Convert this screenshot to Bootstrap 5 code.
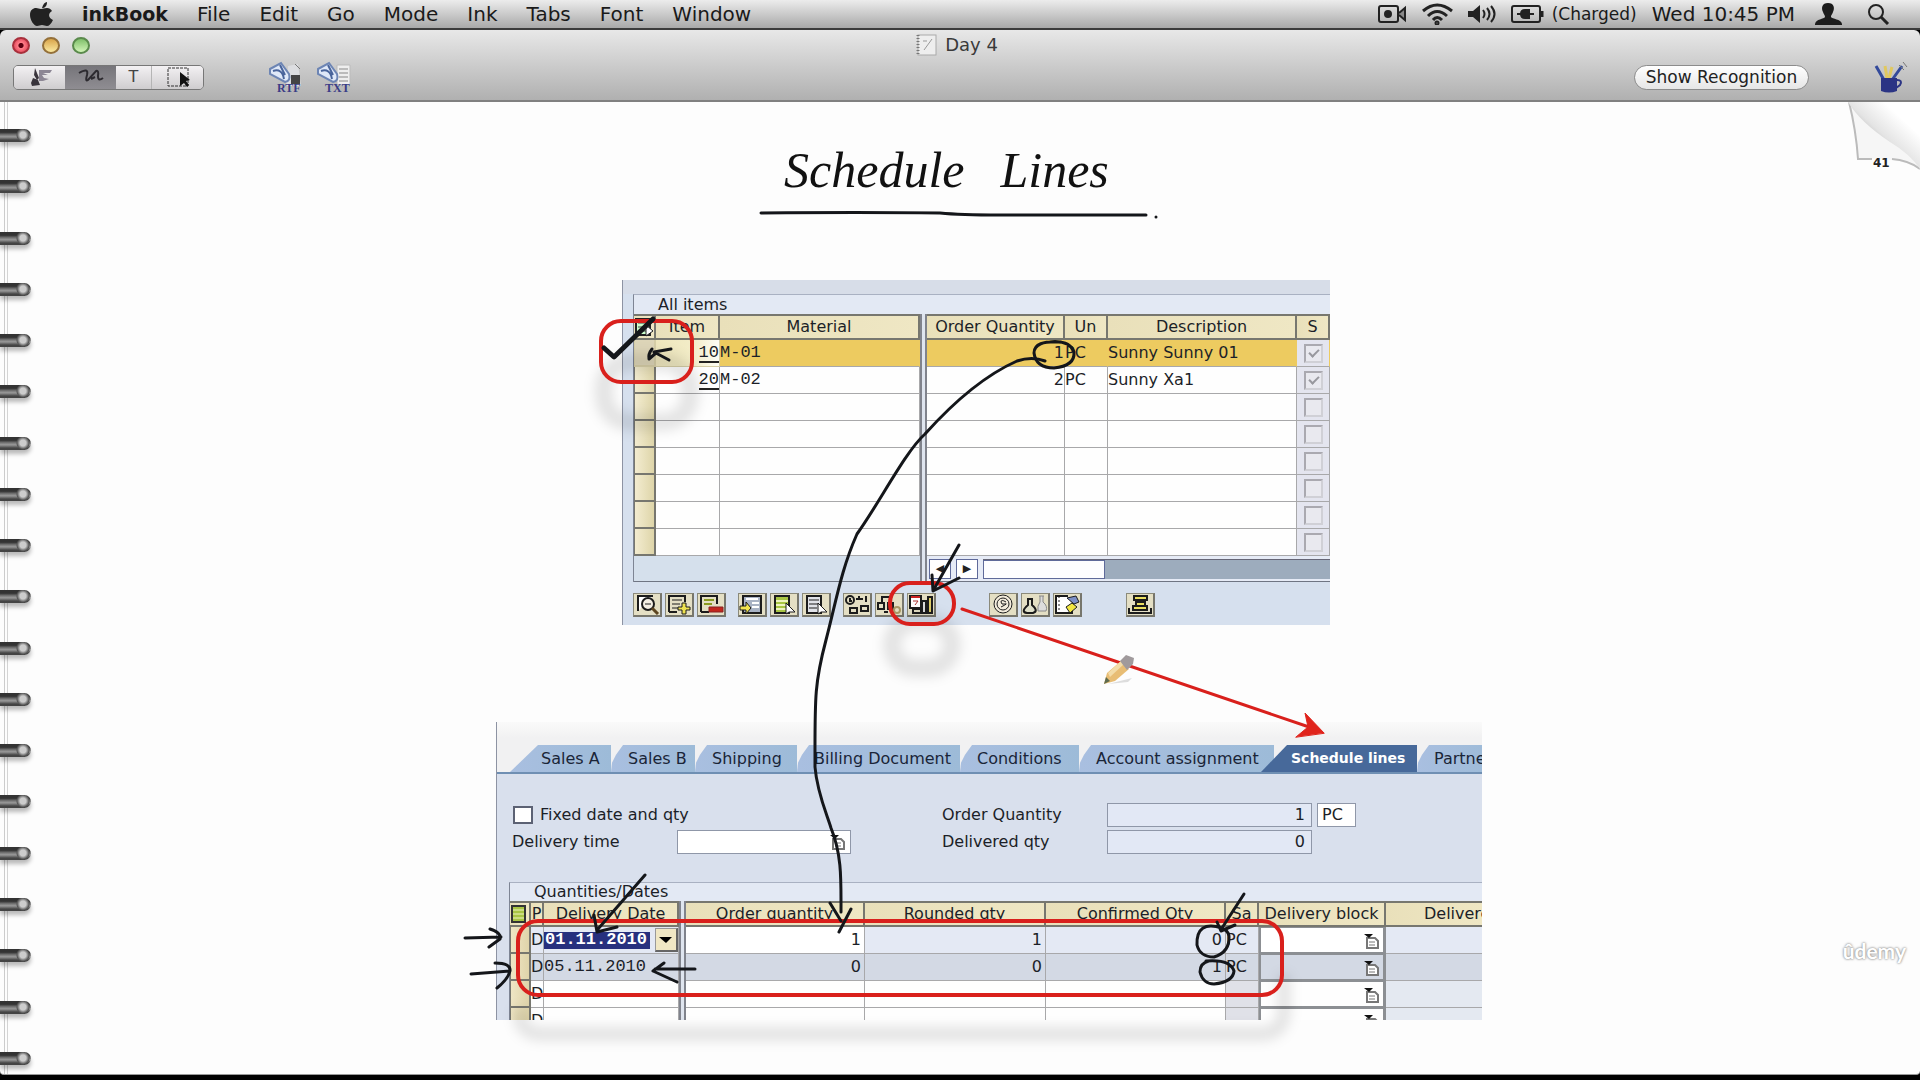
<!DOCTYPE html>
<html lang="en">
<head>
<meta charset="utf-8">
<meta name="viewport" content="width=device-width, initial-scale=1">
<title>inkBook - Day 4</title>
<link rel="stylesheet" href="https://cdn.jsdelivr.net/npm/bootstrap@5.3.0/dist/css/bootstrap.min.css">
<script src="https://cdn.jsdelivr.net/npm/bootstrap@5.3.0/dist/js/bootstrap.bundle.min.js"></script>
<style>
body{font-family:"DejaVu Sans",sans-serif;font-size:16px;line-height:20px;color:#1c1f28;background:#000;overflow-x:hidden}
.menubar{height:30px;padding:0 30px;gap:29px;font-size:20px;line-height:28px;color:#1a1a1a;background:linear-gradient(#ececec,#a9a9a9);border-bottom:2px solid #3c3c3c}
.menubar a{color:inherit;text-decoration:none}
.menubar .app-name{font-size:19px}
.tray{gap:15px}
.tray .charge{font-size:17px;margin-left:-8px}
.tray .clock{margin-right:4px}
.window-top{background:linear-gradient(#e8e8e8,#b0b0b0);border-bottom:2px solid #808080;border-radius:6px 6px 0 0;height:72px}
.title-row{height:30px;padding-left:12px}
.lights{gap:12px}
.light{width:18px;height:17px;border-radius:50%;border:2px solid #777}
.light.close-l{background:radial-gradient(circle,#5a0010 0 22%,#ff7d88 32%,#d8344a);border-color:#a8303c}
.light.min-l{background:linear-gradient(#d9a44a,#fbe9a0);border-color:#94703a}
.light.max-l{background:linear-gradient(#7fbf6a,#d2f5b8);border-color:#5a8a4c}
.doc-title{font-size:18px;color:#3a3a3a;gap:8px}
.tool-row{height:34px;padding:0 12px 0 13px}
.seg{border:1px solid #777;border-radius:5px;overflow:hidden;height:25px}
.seg button{border:0;background:linear-gradient(#f3f1f3,#cfcdcf);width:51px;height:23px;padding:0;display:flex;align-items:center;justify-content:center;font-size:16px;color:#444}
.seg button.on{background:linear-gradient(#76757a,#8f8d92)}
.seg button.txt{width:36px;border-right:1px solid #b5b5b5}
.plain-btn{border:0;background:none;padding:0;line-height:0}
.export{margin-left:62px}
.cup{margin-left:65px}
.recog{border:1px solid #8c8c8c;border-radius:13px;background:linear-gradient(#fff,#e6e6e6);height:25px;width:175px;padding:0;font-size:17px;line-height:22px;color:#222}
.notebook{background:#fdfdfd;border-bottom:1px solid #999;margin-bottom:5px;border-radius:0 0 4px 4px;overflow:hidden}
.binder{width:32px;padding:27px 0 9px;background:linear-gradient(90deg,transparent 4px,#ccc 4px 5px,transparent 5px 7px,#d4d4d4 7px 8px,transparent 8px);left:0;top:0;bottom:0}
.binder i{display:block;height:13px;width:31px;border-radius:0 7px 7px 0;background:radial-gradient(circle at 23px 6px,#ccc 0 3px,#555 6px,transparent 7px),linear-gradient(#333 0 25%,#777 45%,#999 60%,#444 85%);box-shadow:0 4px 4px #0004}
.curl{top:0;right:0}
.udemy{right:14px;bottom:111px;font:700 21px/24px Lato,sans-serif;color:#fff;text-shadow:0 0 2px #888,0 0 3px #aaa}
.sheet{width:1120px;margin:0 auto;padding-bottom:54px}
.hand{font:italic 400 50px/56px "Liberation Serif",serif;color:#111;gap:36px;margin:0;padding:40px 0 82px 384px}
.ink{left:0;top:0;pointer-events:none}
.mono{font-family:"Liberation Mono",monospace;font-size:17px}

.sap{border-left:1px solid #8d93a3;background:#d6e0ed}
.items-shot{width:708px;margin-left:222px;padding:14px 0 8px 10px;background:linear-gradient(#d7dde8 14px,#d6e0ee 14px)}
.box{border-top:1px solid #a9b1c2;border-left:1px solid #7e8594;background:#e3e9f4}
.box-label{font-size:16px;line-height:19px;margin:0}
.grid{table-layout:fixed;border-collapse:separate;border-spacing:0;width:100%;margin:0}
.grid th{height:26px;padding:0;text-align:center;font-weight:400;background:linear-gradient(90deg,#e9e0ba,#efe7c4);border:solid #77776f;border-width:2px 2px 2px 0;white-space:nowrap;overflow:hidden;line-height:20px}
.grid td{height:27px;padding:0;background:#fefefe;border:solid #a8a8aa;border-width:0 1px 1px 0;line-height:20px;white-space:nowrap;overflow:hidden}
.grid .pick{background:linear-gradient(90deg,#f3ecd0,#ded5a9);border:solid #77776f;border-width:0 2px 2px 1px}
.grid tr.sel td{background:#edcb60;border-right-color:#edcb60}
.grid tr.sel td.pale,.grid tr.sel td.pick{background:linear-gradient(90deg,#eee6bd,#f3edc8 60%,#fdfdf6);border-color:#d5cda6}
.grid tr.sel td.pick{background:#ddd5b8}
.under{border-bottom:2px solid #222;display:inline-block;line-height:17px}
.grid .grey,.grid tr.sel td.grey{background:#e4e5ef;text-align:center}
.grid input[type=checkbox]{appearance:none;width:19px;height:19px;border:2px solid #aaa9b0;border-right-color:#d0d0d6;border-bottom-color:#d0d0d6;background:#e9e9ef;display:block;margin:0 auto}
.grid input:checked::after{content:"";display:block;width:10px;height:6px;margin:3px 0 0 3px;border:solid #98989e;border-width:0 0 2px 2px;transform:rotate(-45deg)}
.col-rule{flex:none;width:7px;border:solid #80838c;border-width:0 2px;background:#dfe5ef}
.part-material{flex:none;width:286px}
.part-date{flex:none;width:169px}
.part-qty{flex:none;width:800px}
.foot-l{height:26px;background:#d5e0ec;border-bottom:1px solid #6f7583}
.foot-r{height:26px;padding:3px 0 3px 2px;gap:5px;background:#e6ebf6;border-bottom:1px solid #6f7583}
.arrow-b{border:1px solid #5f6a9a;background:#fff;width:22px;height:20px;padding:0;font-size:11px;line-height:16px;color:#222}
.track{background:#9dacbd;border-top:1px solid #667;height:20px}
.thumb{background:#fdfdff;border:1px solid #5f6a9a;width:122px;height:19px}
.icons{padding-top:11px;gap:12px}
.icons .set{display:flex;gap:3px}
.icons .far{margin-left:41px}
.icons .far2{margin-left:32px}
.ib{width:29px;height:24px;padding:0;border:1px solid #8b8a7a;border-right:2px solid #77766c;border-bottom:2px solid #77766c;background:#e4dfc4;line-height:0}
.ib svg{width:26px;height:21px;fill:none;stroke:#1c1c1c;stroke-width:2}

.lines-shot{width:986px;height:298px;margin:97px 0 0 96px;overflow:hidden;background:#d9e0ed}
.tabband{background:linear-gradient(#fafafa,#f1f1f2 16px);padding:23px 0 0 14px;border-bottom:2px solid #6f8fb3;margin-left:-1px}
.tabband a{height:27px;line-height:27px;padding-left:17px;background:linear-gradient(90deg,#a9bfe0,#9dbbd8);color:#1a2538;text-decoration:none;white-space:nowrap;flex:none;clip-path:polygon(0 100%,1px 66%,5px 36%,12px 0,100% 0,100% 100%)}
.tabband a.first{padding-left:31px;width:101px;clip-path:polygon(0 100%,28px 0,100% 0,100% 100%)}
.tabband a.current{padding-left:30px;margin-left:-13px;width:156px;background:#47699a;color:#fff;font-weight:700;font-size:14px;clip-path:polygon(0 100%,26px 0,100% 0,100% 100%)}
.w84{width:84px}.w102{width:102px}.w163{width:163px}.w119{width:119px}.w195{width:195px}
.fields{padding:27px 0 0 15px}
.fields .line{height:27px;display:flex;align-items:center}
.fields input[type=text]{border:1px solid #8f97a8;height:24px;padding:0 6px;border-radius:0;background:#fff;font:inherit;color:inherit}
.fields input[readonly]{background:#e2e8f5;text-align:right;width:205px}
.fields input[type=checkbox]{appearance:none;width:20px;height:18px;border:2px solid #5c6274;background:#fff;margin:0 7px 0 1px}
.fields input.unit{width:39px;margin-left:5px;padding:0 4px}
.fields input.time{width:174px}
.w-left{width:430px}.w-lab{width:165px}
.match{left:317px}
.q-box{margin:27px 0 0 12px}
.q-box .box-label{padding-left:24px;line-height:18px}
.g2 tr.r1 td{background:#e4e9f4}
.g2 tr.r2 td{background:#d3d9e4}
.g2 tr.r1 td.white{background:#fff}
.g2 td.num{text-align:right;padding-right:3px}
.g2 td.sa{background:#e0e1e8}
.g2 td.pick.pick{background:linear-gradient(90deg,#efe6c4,#dfd4aa);border:solid #77776f;border-width:0 2px 2px 1px}
.g2 td.blk.blk{border:2px solid #8c8f93;border-width:1px 3px 2px 2px}
.g2 td.last{background:#e4e9f1}
.g2 th.clipped{text-align:left;padding-left:38px}
.date-in{width:106px;height:17px;border:0;padding:0 1px;background:#27307e;color:#fff;font-weight:700}
.drop{width:23px;height:24px;border:1px solid #999;border-right:2px solid #666;border-bottom:2px solid #666;background:#f0e7c4;padding:0;line-height:0}
</style>
</head>
<body class="min-vh-100 d-flex flex-column">
<nav class="menubar d-flex align-items-center" aria-label="Menu bar">
  <a href="#" aria-label="Apple" class="lh-1"><svg width="23" height="24" viewBox="0 0 23 24" fill="#222"><path d="M12 6C13 2 15 0 17 0C17 4 15 6 12 6ZM11 7C13 7 14 6 17 6C19 6 21 7 22 9C18 11 18 16 23 18C21 22 19 24 17 24C15 24 14 23 12 23C10 23 9 24 7 24C4 24 0 18 0 13C0 8 3 6 6 6C8 6 9 7 11 7Z"/></svg></a>
  <a href="#" class="fw-bold app-name">inkBook</a><a href="#">File</a><a href="#">Edit</a><a href="#">Go</a><a href="#">Mode</a><a href="#">Ink</a><a href="#">Tabs</a><a href="#">Font</a><a href="#">Window</a>
  <div class="tray d-flex align-items-center ms-auto">
    <svg width="29" height="18" viewBox="0 0 29 18" fill="none" stroke="#222" stroke-width="2"><rect x="1" y="1" width="19" height="16" rx="2"/><circle cx="10" cy="9" r="3" fill="#222"/><path d="M21 8l6-5v12l-6-5" fill="#888"/></svg>
    <svg width="31" height="22" viewBox="0 0 31 22" fill="none" stroke="#222" stroke-width="3"><path d="M1 8Q15-4 30 8M6 13Q15 4 25 13M11 17Q15 12 20 17"/><circle cx="15" cy="20" r="1"/></svg>
    <svg width="28" height="20" viewBox="0 0 28 20" fill="none" stroke="#222" stroke-width="2"><path d="M0 7h5l7-6v18l-7-6H0z" fill="#222" stroke="none"/><path d="M15 6q3 4 0 8M19 4q5 6 0 12M23 2q7 8 0 16"/></svg>
    <svg width="34" height="18" viewBox="0 0 34 18" fill="none" stroke="#222" stroke-width="2"><rect x="1" y="1" width="28" height="16" rx="2"/><path d="M31 6v6" stroke-width="3"/><path d="M6 9h5M23 9h-4M18 5h-4q-4 0-4 4t4 4h4z" fill="#222"/></svg>
    <span class="charge">(Charged)</span>
    <span class="clock">Wed 10:45 PM</span>
    <svg width="29" height="22" viewBox="0 0 29 22" fill="#1c1c1c"><path d="M14 0c6 0 7 5 5 9-1 3-2 3-2 5 1 2 10 2 11 7v1H1v-1c1-5 9-5 10-7 0-2-1-2-2-5-2-4-1-9 5-9z"/></svg>
    <a href="#" aria-label="Search" class="ms-2 lh-1"><svg width="24" height="22" viewBox="0 0 24 22" fill="none" stroke="#222" stroke-width="3"><circle cx="10" cy="9" r="7" stroke-width="2"/><path d="M15 14l7 7"/></svg></a>
  </div>
</nav>
<header class="window-top">
  <div class="title-row d-flex align-items-center">
    <div class="lights d-flex"><button class="light close-l p-0" aria-label="Close"></button><button class="light min-l p-0" aria-label="Minimise"></button><button class="light max-l p-0" aria-label="Zoom"></button></div>
    <div class="doc-title d-flex align-items-center justify-content-center flex-grow-1 pe-5 me-5">
      <svg width="21" height="22" viewBox="0 0 21 22"><rect x="2" y="1" width="18" height="20" fill="#eee" stroke="#aaa"/><path d="M2 1v20" stroke="#777" stroke-width="3" stroke-dasharray="1 2"/><path d="M8 16l8-11M7 7h4" stroke="#999"/></svg>
      <span>Day 4</span>
    </div>
  </div>
  <div class="tool-row d-flex align-items-center">
    <div class="seg d-flex" role="group" aria-label="Tools">
      <button aria-label="Brush"><svg width="26" height="20" viewBox="0 0 26 20"><path d="M12 3h13l-2 3h-7l5 2h-6l2 3 5 1-6 2h-4z" fill="#8c8694"/><path d="M8 1l4 10-2 2-3-5zM6 11l5 2 2 5-8 1-1-3z" fill="#39343c"/></svg></button>
      <button class="on" aria-label="Pen"><svg width="26" height="18" viewBox="0 0 26 18" fill="none" stroke="#2d2b30" stroke-width="2"><path d="M1 5q10-6 8 2q-2 7 1 5l8-9q3-1 2 5 0 6 5 2M13 11l4-2"/></svg></button>
      <button class="txt">T</button>
      <button aria-label="Select"><svg width="26" height="22" viewBox="0 0 26 22"><rect x="3" y="2" width="20" height="18" fill="none" stroke="#333" stroke-dasharray="3 1"/><path d="M15 6v14l4-3 3 4 2-2-3-4 4-1z" fill="#111"/></svg></button>
    </div>
    <button class="plain-btn export" aria-label="Export RTF"><svg width="38" height="34" viewBox="0 0 38 34"><path d="M22 6l10-2 3 22H20z" fill="#dcdde0"/><path d="M4 9l11-6 8 11q2 7-4 8L4 14z" fill="#dfe8f8" stroke="#6d85b4" stroke-width="2"/><path d="M7 11q9-3 11 8M14 5l5 10" stroke="#49649b" stroke-width="2" fill="none"/><path d="M25 15h9v9h-9z" fill="#444"/><path d="M29 4l5 5" stroke="#777"/><text x="11" y="32" font-family="Liberation Serif" font-weight="700" font-size="12" fill="#3a3d86">RTF</text></svg></button>
    <button class="plain-btn ms-2" aria-label="Export TXT"><svg width="42" height="34" viewBox="-4 0 42 34"><path d="M21 5h13v20H21z" fill="#eee" stroke="#bbb"/><path d="M23 9h9M23 13h9M23 17h9M23 21h9" stroke="#888"/><path d="M2 9l11-6 8 11q2 7-4 8L2 14z" fill="#dfe8f8" stroke="#6d85b4" stroke-width="2"/><path d="M5 11q9-3 11 8M12 5l5 10" stroke="#49649b" stroke-width="2" fill="none"/><text x="9" y="32" font-family="Liberation Serif" font-weight="700" font-size="12" fill="#3a3d86">TXT</text></svg></button>
    <button class="recog ms-auto">Show Recognition</button>
    <button class="plain-btn cup" aria-label="Pens"><svg width="34" height="31" viewBox="0 0 34 31"><path d="M2 4l8 14M28 4L18 18" stroke="#334a9b" stroke-width="3"/><path d="M11 4l2 12M18 5l-3 11" stroke="#e0c860" stroke-width="3"/><path d="M25 3l5 5M29 0l4 5" stroke="#777"/><path d="M7 16h16v13q-8 3-16 0z" fill="#2b3484"/><path d="M23 18q6 0 3 5l-4 3" fill="none" stroke="#2b3484" stroke-width="2"/></svg></button>
  </div>
</header>
<main class="notebook position-relative flex-grow-1">
  <div class="binder position-absolute d-flex flex-column justify-content-between"><i></i><i></i><i></i><i></i><i></i><i></i><i></i><i></i><i></i><i></i><i></i><i></i><i></i><i></i><i></i><i></i><i></i><i></i><i></i></div>
  <svg class="curl position-absolute" width="72" height="70" viewBox="0 0 72 70">
    <defs><linearGradient id="g1" x1="0" y1="1" x2="1" y2="0"><stop offset=".3" stop-color="#a8a8a8"/><stop offset=".5" stop-color="#e4e4e4"/><stop offset=".75" stop-color="#fff"/></linearGradient></defs>
    <path d="M1 0q7 28 9 57 40-3 62 10V0z" fill="#f6f6f6"/><path d="M1 0q7 28 9 57h14M44 57q16 1 28 10" fill="none" stroke="#bbb" stroke-width="2"/>
    <path d="M0 0q12 20 42 40 20 12 30 27V0z" fill="url(#g1)"/>
    <text x="25" y="65" font-family="DejaVu Sans" font-weight="700" font-size="12" fill="#222">41</text>
  </svg>
  <div class="sheet position-relative">
    <h1 class="hand d-flex"><span>Schedule</span><span>Lines</span></h1>
    <section class="sap items-shot" aria-label="All items">
      <div class="box">
        <h2 class="box-label ps-4">All items</h2>
        <div class="d-flex">
          <div class="part-material">
            <table class="grid"><colgroup><col style="width:22px"><col style="width:64px"><col></colgroup>
              <thead><tr><th aria-label="Select all"><svg width="20" height="20" viewBox="0 0 20 20"><rect x="2" y="2" width="14" height="16" fill="#cfc" stroke="#222" stroke-width="2"/><path d="M4 6h10M4 10h10M4 14h8" stroke="#444"/><path d="M12 8v11l7-5z" fill="#fff" stroke="#222"/></svg></th><th>Item</th><th>Material</th></tr></thead>
              <tbody class="mono">
                <tr class="sel"><td class="pick"></td><td class="pale text-end"><span class="under">10</span></td><td>M-01</td></tr>
                <tr><td class="pick"></td><td class="text-end"><span class="under">20</span></td><td>M-02</td></tr>
                <tr><td class="pick"></td><td></td><td></td></tr><tr><td class="pick"></td><td></td><td></td></tr><tr><td class="pick"></td><td></td><td></td></tr><tr><td class="pick"></td><td></td><td></td></tr><tr><td class="pick"></td><td></td><td></td></tr><tr><td class="pick"></td><td></td><td></td></tr>
              </tbody></table>
            <div class="foot-l"></div>
          </div>
          <div class="col-rule"></div>
          <div class="flex-grow-1">
            <table class="grid"><colgroup><col style="width:138px"><col style="width:43px"><col><col style="width:33px"></colgroup>
              <thead><tr><th>Order Quantity</th><th>Un</th><th>Description</th><th>S</th></tr></thead>
              <tbody>
                <tr class="sel"><td class="text-end">1</td><td>PC</td><td>Sunny Sunny 01</td><td class="grey"><input type="checkbox" checked disabled aria-label="S 10"></td></tr>
                <tr><td class="text-end">2</td><td>PC</td><td>Sunny Xa1</td><td class="grey"><input type="checkbox" checked disabled aria-label="S 20"></td></tr>
                <tr><td></td><td></td><td></td><td class="grey"><input type="checkbox" disabled aria-label="S"></td></tr>
                <tr><td></td><td></td><td></td><td class="grey"><input type="checkbox" disabled aria-label="S"></td></tr>
                <tr><td></td><td></td><td></td><td class="grey"><input type="checkbox" disabled aria-label="S"></td></tr>
                <tr><td></td><td></td><td></td><td class="grey"><input type="checkbox" disabled aria-label="S"></td></tr>
                <tr><td></td><td></td><td></td><td class="grey"><input type="checkbox" disabled aria-label="S"></td></tr>
                <tr><td></td><td></td><td></td><td class="grey"><input type="checkbox" disabled aria-label="S"></td></tr>
              </tbody></table>
            <div class="foot-r d-flex"><button class="arrow-b" aria-label="Scroll left">◀</button><button class="arrow-b" aria-label="Scroll right">▶</button><div class="track flex-grow-1"><div class="thumb"></div></div></div>
          </div>
        </div>
      </div>
      <div class="icons d-flex">
        <div class="set">
          <button class="ib" aria-label="Details"><svg viewBox="0 0 26 21"><path d="M4 17V2h15" fill="#fff"/><circle cx="14" cy="10" r="6" fill="#f4efe4"/><path d="M11 10h6" stroke-width="1"/><path d="M18 14l6 6" stroke="#5d4520" stroke-width="3"/></svg></button>
          <button class="ib" aria-label="Insert"><svg viewBox="0 0 26 21"><path d="M3 18V2h16v6M3 18h8" /><path d="M6 6h10M6 10h8M6 14h6" stroke-width="1"/><path d="M16 9h4v4h4v3h-4v4h-4v-4h-4v-3h4z" fill="#eee24f" stroke-width="1"/></svg></button>
          <button class="ib" aria-label="Delete"><svg viewBox="0 0 26 21"><path d="M3 18V2h16v8M3 18h8"/><path d="M6 6h10M6 10h8" stroke="#8a9a20"/><path d="M11 13h14v5H11z" fill="#c4261c" stroke="#822" stroke-width="1"/></svg></button>
        </div>
        <div class="set"><button class="ib" aria-label="Copy line"><svg viewBox="0 0 26 21"><rect x="4" y="2" width="18" height="17" fill="#a9b3c4"/><path d="M7 5h12M13 9h7M13 13h7" stroke="#fff"/><path d="M1 12h6V8l5 6-5 6v-4H1z" fill="#f1e44e" stroke-width="1"/></svg></button>
          <button class="ib" aria-label="Select all"><svg viewBox="0 0 26 21"><rect x="4" y="2" width="14" height="17" fill="#a8c544"/><path d="M5 7h12M5 11h12M5 15h10" stroke="#eef3c0"/><path d="M15 9v11l3-2h6z" fill="#fff" stroke-width="1"/></svg></button>
          <button class="ib" aria-label="Deselect all"><svg viewBox="0 0 26 21"><rect x="4" y="2" width="14" height="17" fill="#e0e2e8"/><path d="M6 6h10M6 10h10M6 14h8" stroke-width="1"/><path d="M15 9v11l3-2h6z" fill="#fff" stroke-width="1"/></svg></button></div>
        <div class="set"><button class="ib" aria-label="Availability"><svg viewBox="0 0 26 21"><circle cx="6" cy="6" r="4"/><path d="M6 4v3h2M12 5h3V2M15 5h4M22 2v6M17 12h7v5h-7zM6 14h7v5H6z"/></svg></button>
          <button class="ib" aria-label="Configuration"><svg viewBox="0 0 26 21"><path d="M6 10V3h8v7M2 9h6v6H2zM12 9h5v6h-5zM8 18h4"/><circle cx="21" cy="16" r="3" stroke="#a96"/></svg></button>
          <button class="ib" aria-label="Schedule lines"><svg viewBox="0 0 26 21"><rect x="2" y="2" width="11" height="12" fill="#fff"/><path d="M3 3h9" stroke="#c22"/><path d="M5 7h5l-3 4" stroke="#a33" stroke-width="1"/><path d="M5 15h8v4H5z"/><path d="M14 7h4v12h-4z" fill="#ddd"/><path d="M20 3h4v16h-4z" fill="#e0cf6a"/></svg></button></div>
        <div class="set far"><button class="ib" aria-label="Conditions"><svg viewBox="0 0 26 21"><circle cx="13" cy="10" r="9" fill="#f3ecdc" stroke-width="1"/><circle cx="13" cy="10" r="6" stroke-width="1"/><path d="M16 8q-5-3-5 0t4 2-4 3" stroke-width="1"/></svg></button>
          <button class="ib" aria-label="Batches"><svg viewBox="0 0 26 21"><path d="M17 2h5M18 2v6q-3 4-2 9h8q2-5-3-9V2" stroke="#888" fill="#ddd" stroke-width="1"/><path d="M5 5h6M6 5v6q-8 7-1 8h6q6-2-1-8V5" fill="#dfe0ca"/></svg></button>
          <button class="ib" aria-label="Variants"><svg viewBox="0 0 26 21"><path d="M18 12v7H2V2h12" fill="#fff"/><path d="M5 2v17" stroke-width="1" stroke-dasharray="2"/><path d="M13 4l9-2 3 6-5 2z" fill="#7c8fc6" stroke-width="1"/><path d="M12 13l6-4 5 4-7 6z" fill="#f2e640" stroke-width="1"/></svg></button></div>
        <div class="set far2"><button class="ib" aria-label="Print"><svg viewBox="0 0 26 21"><path d="M7 2h13v4H7zM9 8h9v4H9zM6 12h14v4H6z" fill="#eadf62"/><path d="M2 14v5h22v-5"/></svg></button></div>
      </div>
    </section>

    <section class="sap lines-shot" aria-label="Schedule lines">
      <nav class="tabband d-flex" aria-label="Item tabs"><a href="#" class="first">Sales A</a><a href="#" class="w84">Sales B</a><a href="#" class="w102">Shipping</a><a href="#" class="w163">Billing Document</a><a href="#" class="w119">Conditions</a><a href="#" class="w195">Account assignment</a><a href="#" class="current">Schedule lines</a><a href="#">Partner</a></nav>
      <div class="fields">
        <div class="line"><div class="w-left d-flex align-items-center"><input type="checkbox" id="fx"><label for="fx">Fixed date and qty</label></div><label class="w-lab" for="oq">Order Quantity</label><input type="text" id="oq" value="1" readonly><input type="text" value="PC" aria-label="Unit" class="unit"></div>
        <div class="line"><div class="w-left d-flex align-items-center position-relative"><label class="w-lab" for="dt">Delivery time</label><input type="text" id="dt" class="time"><svg class="position-absolute match" width="16" height="16" viewBox="0 0 16 16"><path d="M4 5h8l3 3v7H4z" fill="#fff" stroke="#777" stroke-width="2"/><path d="M6 9h6M6 12h6" stroke="#777"/><path d="M1 1h9L6 5z" fill="#111"/></svg></div><label class="w-lab" for="dq">Delivered qty</label><input type="text" id="dq" value="0" readonly></div>
      </div>
      <div class="box q-box">
        <h2 class="box-label">Quantities/Dates</h2>
        <div class="d-flex">
          <div class="part-date">
            <table class="grid g2"><colgroup><col style="width:21px"><col style="width:13px"><col></colgroup>
              <thead><tr><th aria-label="Select all"><svg width="19" height="20" viewBox="0 0 19 20"><rect x="2" y="2" width="13" height="16" fill="#a8c544" stroke="#333" stroke-width="2"/><path d="M3 6h11M3 10h11M3 14h11" stroke="#eef3c0"/></svg></th><th>P</th><th>Delivery Date</th></tr></thead>
              <tbody>
                <tr class="r1"><td class="pick"></td><td>D</td><td class="mono"><div class="d-flex align-items-center justify-content-between"><input class="date-in" value="01.11.2010" aria-label="Delivery date"><button class="drop" aria-label="Open calendar"><svg width="14" height="8" viewBox="0 0 14 8"><path d="M0 1h13L7 7z"/></svg></button></div></td></tr>
                <tr class="r2"><td class="pick"></td><td>D</td><td class="mono">05.11.2010</td></tr>
                <tr><td class="pick"></td><td>D</td><td></td></tr><tr><td class="pick"></td><td>D</td><td></td></tr>
              </tbody></table>
          </div>
          <div class="col-rule"></div>
          <div class="part-qty">
            <table class="grid g2"><colgroup><col style="width:179px"><col style="width:181px"><col style="width:180px"><col style="width:33px"><col style="width:127px"><col></colgroup>
              <thead><tr><th>Order quantity</th><th>Rounded qty</th><th>Confirmed Qty</th><th>Sa</th><th>Delivery block</th><th class="clipped">Delivered</th></tr></thead>
              <tbody>
                <tr class="r1"><td class="num white">1</td><td class="num">1</td><td class="num">0</td><td class="sa">PC</td><td class="blk white text-end pe-1"><svg width="16" height="16" viewBox="0 0 16 16"><path d="M4 5h8l3 3v7H4z" fill="#fff" stroke="#777" stroke-width="2"/><path d="M6 9h6M6 12h6" stroke="#777"/><path d="M1 1h9L6 5z" fill="#111"/></svg></td><td class="last"></td></tr>
                <tr class="r2"><td class="num">0</td><td class="num">0</td><td class="num">1</td><td class="sa">PC</td><td class="blk text-end pe-1"><svg width="16" height="16" viewBox="0 0 16 16"><path d="M4 5h8l3 3v7H4z" fill="#fff" stroke="#777" stroke-width="2"/><path d="M6 9h6M6 12h6" stroke="#777"/><path d="M1 1h9L6 5z" fill="#111"/></svg></td><td class="last"></td></tr>
                <tr><td></td><td></td><td></td><td class="sa"></td><td class="blk text-end pe-1"><svg width="16" height="16" viewBox="0 0 16 16"><path d="M4 5h8l3 3v7H4z" fill="#fff" stroke="#777" stroke-width="2"/><path d="M6 9h6M6 12h6" stroke="#777"/><path d="M1 1h9L6 5z" fill="#111"/></svg></td><td class="last"></td></tr>
                <tr><td></td><td></td><td></td><td class="sa"></td><td class="blk text-end pe-1"><svg width="16" height="16" viewBox="0 0 16 16"><path d="M4 5h8l3 3v7H4z" fill="#fff" stroke="#777" stroke-width="2"/><path d="M1 1h9L6 5z" fill="#111"/></svg></td><td class="last"></td></tr>
              </tbody></table>
          </div>
        </div>
      </div>
    </section>

    <svg class="ink position-absolute" width="1120" height="972" viewBox="400 102 1120 972" fill="none" stroke-linecap="round" stroke-linejoin="round" aria-hidden="true">
      <defs><filter id="soft" x="-40%" y="-60%" width="180%" height="220%"><feGaussianBlur stdDeviation="6"/></filter></defs>
      <!-- soft shadows under the red marks -->
      <g stroke="#000" stroke-opacity=".1" stroke-width="18" filter="url(#soft)"><rect x="604" y="362" width="86" height="60" rx="26"/><rect x="892" y="622" width="60" height="46" rx="23"/><path d="M520 1014q0 20 22 20h718q24 0 24-24v-30" stroke-width="14"/></g>
      <!-- red marks -->
      <g stroke="#d9201c" stroke-width="4"><rect x="601" y="321" width="91" height="61" rx="20"/><rect x="890" y="583" width="64" height="41" rx="20"/><rect x="518" y="921" width="764" height="74" rx="20"/><path d="M962 609L1312 728" stroke-width="3"/></g>
      <path d="M1324 733l-19-20 3 14-12 10z" fill="#e0241c" stroke="#e0241c"/>
      <!-- black pen strokes -->
      <g stroke="#14161a" stroke-width="3">
        <path d="M761 213Q860 212 940 213Q960 215 1000 215L1146 215M1156 217v0"/>
        <path d="M604 348l10 9 39-38" stroke-width="5"/><path d="M671 349l-17 3 15 8M652 349q-4 5-3 10l7-6"/>
        <path d="M1061 342Q1034 340 1034 353Q1036 368 1054 368Q1075 366 1074 352Q1070 340 1050 342"/>
        <path d="M1045 361Q1032 356 1017 361C990 373 960 395 925 434C905 452 880 502 857 534C841 570 836 602 826 640C814 685 815 700 815 767C817 792 826 812 831 828C842 855 841 880 841 912M830 903l11 18M851 909l-12 23"/>
        <path d="M959 545L934 589M932 575l1 16 26-13M645 875l-47 54M594 915l3 17 20-5M695 969h-40M664 963l-11 8 24 11"/>
        <path d="M465 938l36-1M490 929q12 4 10 10l-11 8M471 974l39-3M495 963q16 0 15 8-2 8-13 17"/>
        <path d="M1222 928Q1196 920 1197 945Q1200 957 1214 957Q1230 952 1229 936Q1228 930 1221 928M1209 961Q1200 963 1200 972Q1203 984 1214 984Q1233 982 1234 971Q1230 959 1206 961M1244 894l-22 34M1217 922l4 9 14-6"/>
      </g>
      <!-- pencil cursor -->
      <g stroke="none"><path d="M1108 684l20-2 4-4z" fill="#ddd"/><path d="M1104 684l3-11 14-12 8 8-14 12z" fill="#e8bd74"/><path d="M1108 673l13-12 3 3-14 13z" fill="#f3dca8"/><path d="M1120 661l6-6 8 3-1 6-6 6z" fill="#a09a9c"/><path d="M1104 684l2-7 4 4z" fill="#5e6b4e"/></g>
    </svg>
  </div>
  <div class="udemy position-absolute">ûdemy</div>
</main>
</body>
</html>
